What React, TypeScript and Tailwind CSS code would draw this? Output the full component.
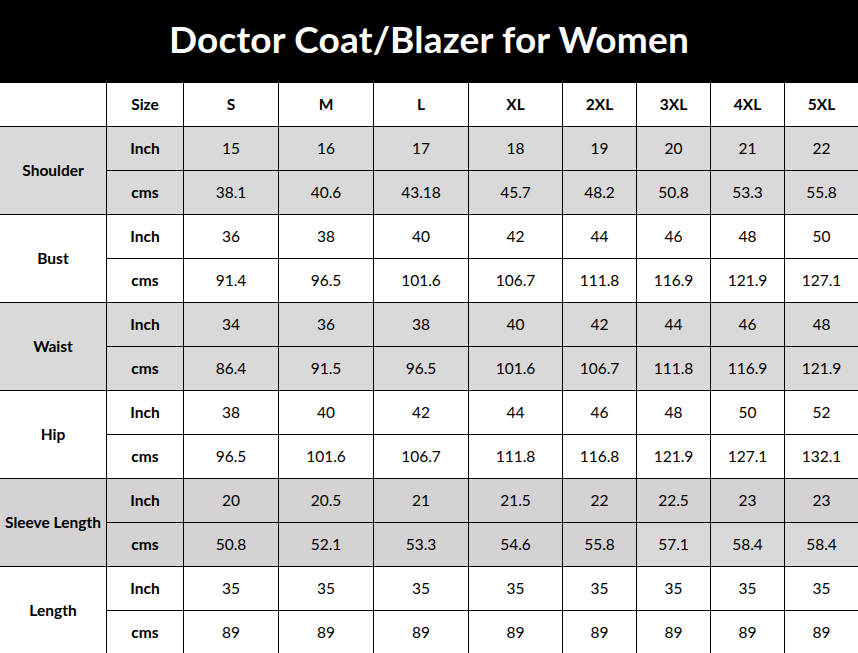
const sizes = ["S", "M", "L", "XL", "2XL", "3XL", "4XL", "5XL"];

const rows = [
  { label: "Shoulder", shade: "bg-[#d9d9d9]", inch: ["15", "16", "17", "18", "19", "20", "21", "22"], cms: ["38.1", "40.6", "43.18", "45.7", "48.2", "50.8", "53.3", "55.8"] },
  { label: "Bust", shade: "bg-white", inch: ["36", "38", "40", "42", "44", "46", "48", "50"], cms: ["91.4", "96.5", "101.6", "106.7", "111.8", "116.9", "121.9", "127.1"] },
  { label: "Waist", shade: "bg-[#d9d9d9]", inch: ["34", "36", "38", "40", "42", "44", "46", "48"], cms: ["86.4", "91.5", "96.5", "101.6", "106.7", "111.8", "116.9", "121.9"] },
  { label: "Hip", shade: "bg-white", inch: ["38", "40", "42", "44", "46", "48", "50", "52"], cms: ["96.5", "101.6", "106.7", "111.8", "116.8", "121.9", "127.1", "132.1"] },
  { label: "Sleeve Length", shade: "bg-[#d4d2d3]", inch: ["20", "20.5", "21", "21.5", "22", "22.5", "23", "23"], cms: ["50.8", "52.1", "53.3", "54.6", "55.8", "57.1", "58.4", "58.4"] },
  { label: "Length", shade: "bg-white", inch: ["35", "35", "35", "35", "35", "35", "35", "35"], cms: ["89", "89", "89", "89", "89", "89", "89", "89"] },
];

function Cell({ children, className = "", last = false }: { children?: React.ReactNode; className?: string; last?: boolean }) {
  return (
    <div className={`flex items-center justify-center border-b border-black ${last ? "" : "border-r"} ${className}`}>
      {children}
    </div>
  );
}

export default function App() {
  return (
    <div className="h-[653px] w-[858px] overflow-hidden bg-white font-['Lato',sans-serif] text-[15.5px] text-black">
      <div className="flex h-[83px] items-center justify-center bg-black pb-1.5">
        <h1 className="text-[37px] font-bold tracking-[0.2px] text-white">Doctor Coat/Blazer for Women</h1>
      </div>

      <div className="grid grid-cols-[107px_77px_95px_95px_95px_94px_74px_74px_74px_1fr] auto-rows-[44px]">
        <Cell />
        <Cell className="font-bold">Size</Cell>
        {sizes.map((s, i) => (
          <Cell key={s} className="font-bold" last={i === sizes.length - 1}>
            {s}
          </Cell>
        ))}

        {rows.map((r) => (
          <div key={r.label} className="contents">
            <Cell className={`row-span-2 font-bold ${r.shade}`}>{r.label}</Cell>
            <Cell className={`font-bold ${r.shade}`}>Inch</Cell>
            {r.inch.map((v, i) => (
              <Cell key={"i" + i} className={r.shade} last={i === 7}>
                {v}
              </Cell>
            ))}
            <Cell className={`font-bold ${r.shade}`}>cms</Cell>
            {r.cms.map((v, i) => (
              <Cell
                key={"c" + i}
                className={r.label === "Sleeve Length" && i >= 5 ? "bg-[#d9d9d9]" : r.shade}
                last={i === 7}
              >
                {v}
              </Cell>
            ))}
          </div>
        ))}
      </div>
    </div>
  );
}
